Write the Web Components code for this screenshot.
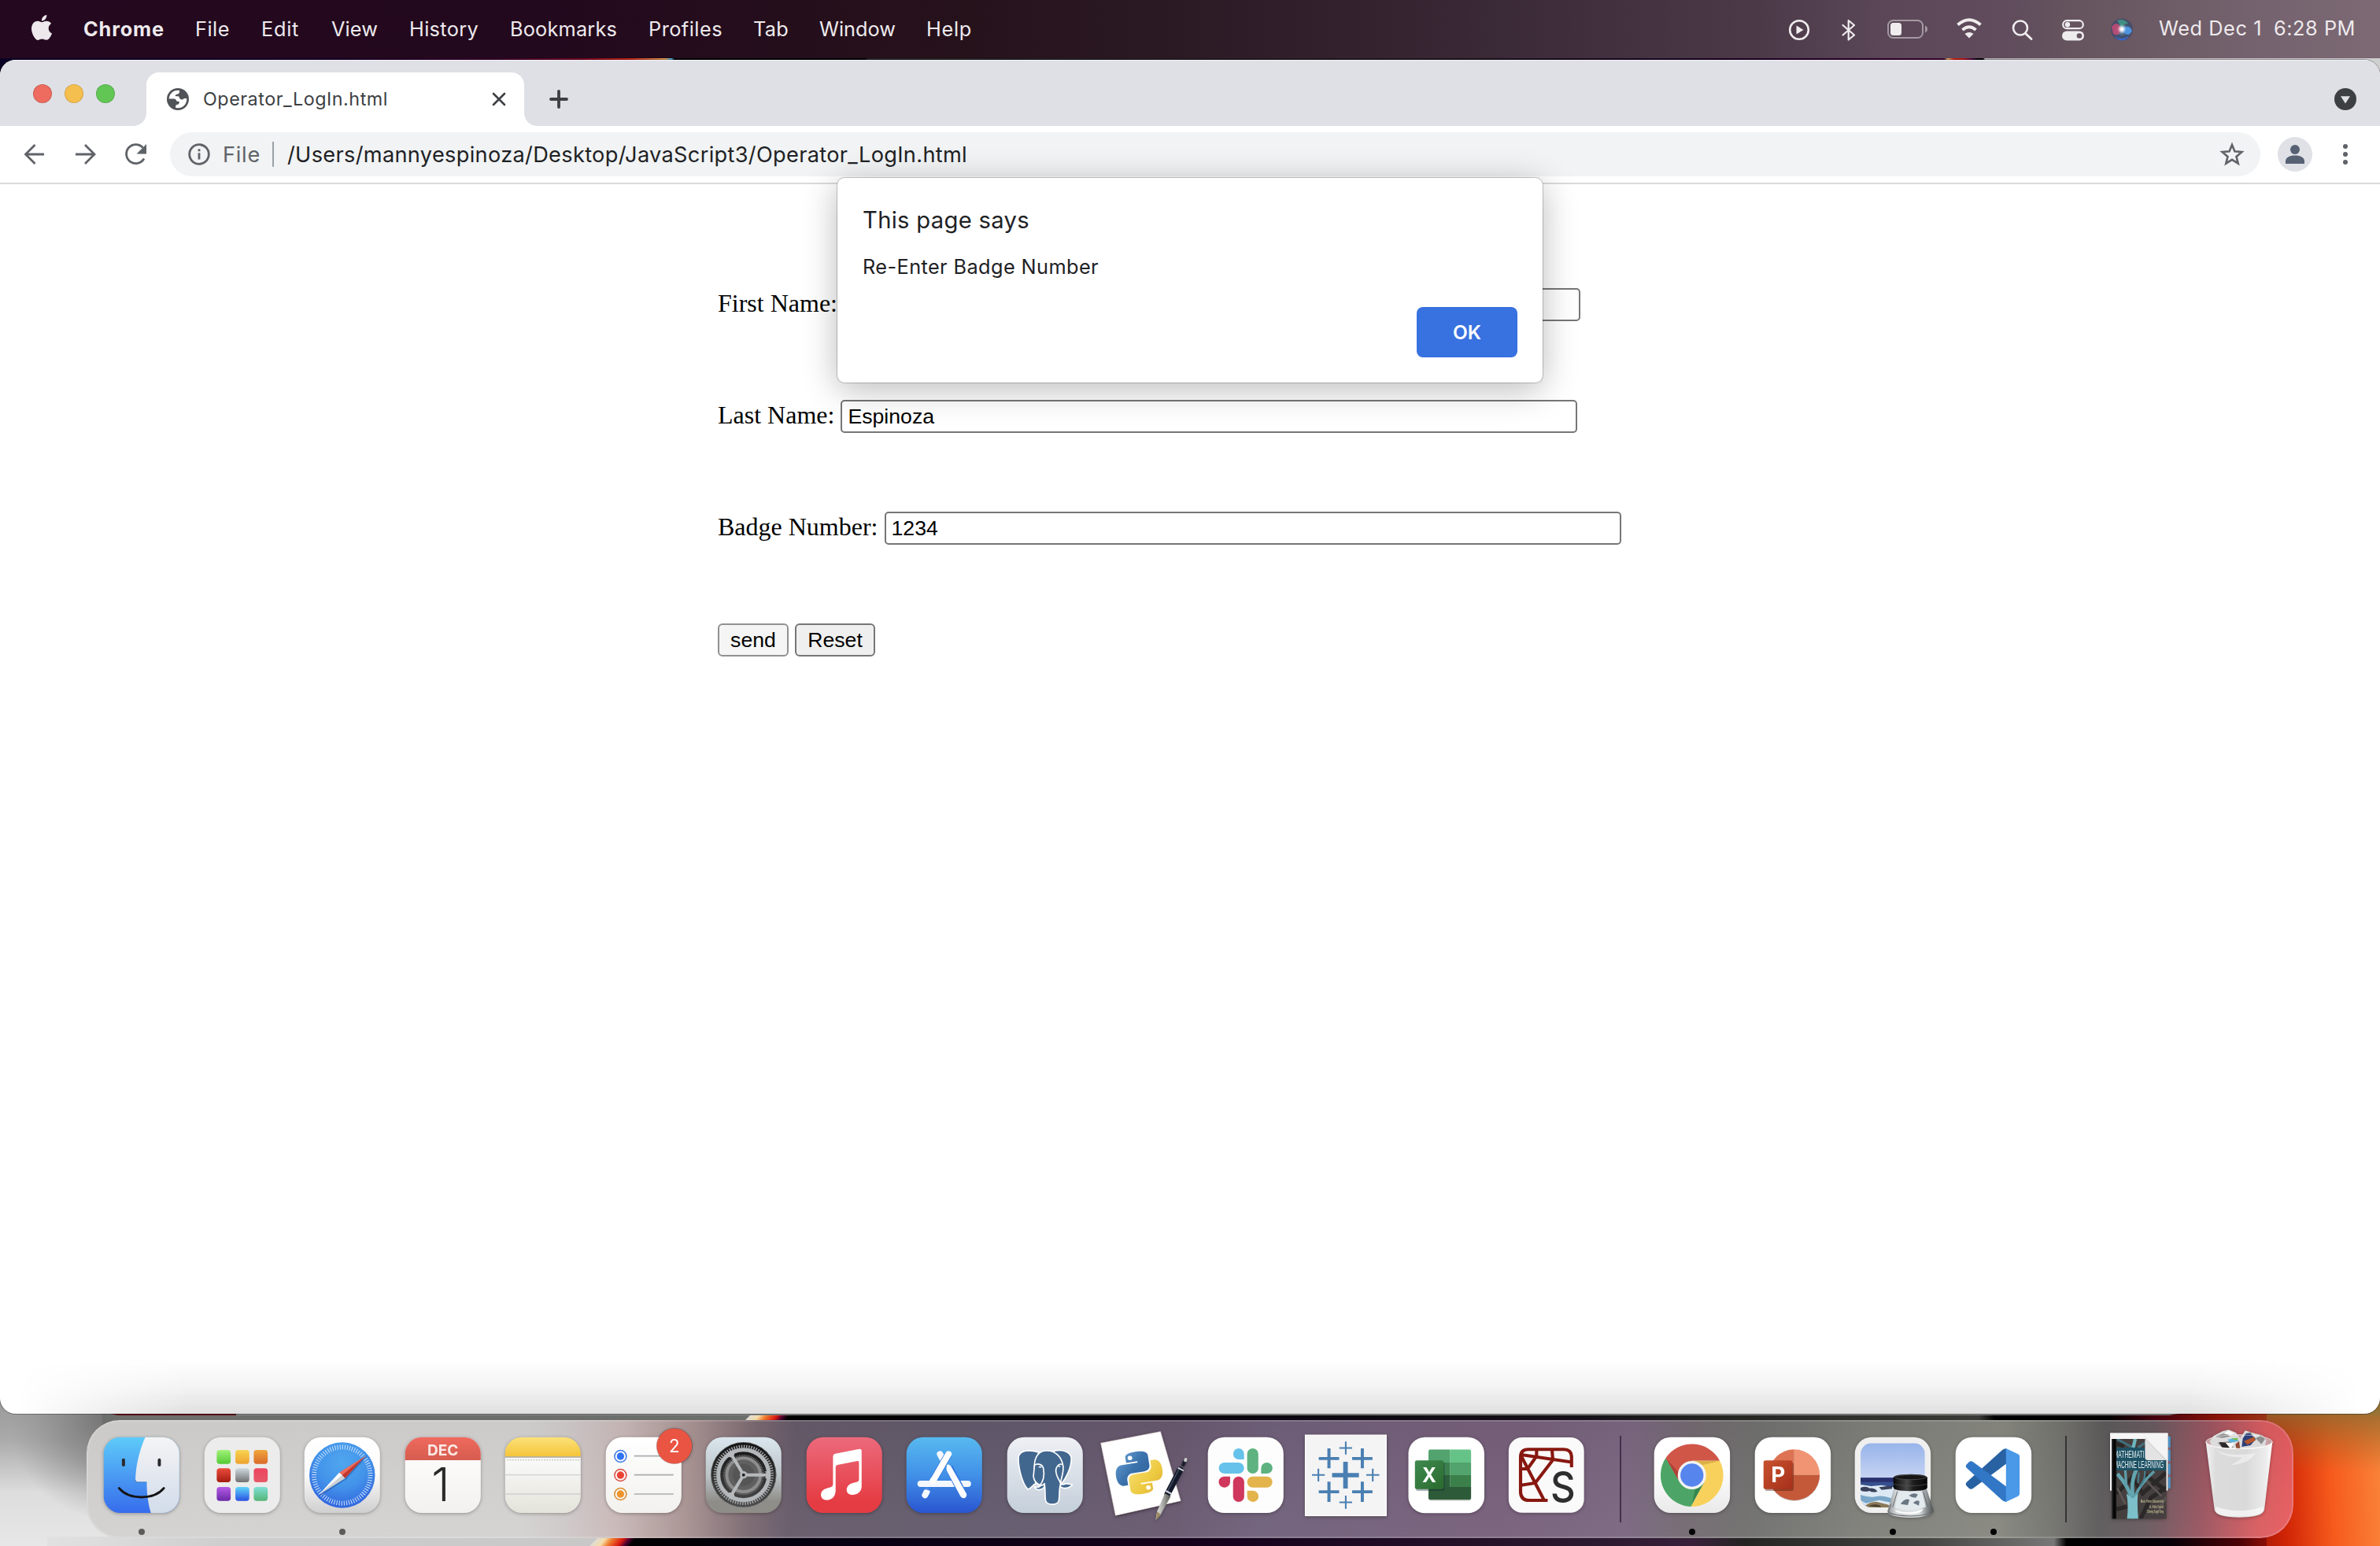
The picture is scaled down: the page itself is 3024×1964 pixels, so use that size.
<!DOCTYPE html>
<html lang="en">
<head>
<meta charset="utf-8">
<title>Operator_LogIn.html</title>
<style>
html,body{margin:0;padding:0;height:100%;overflow:hidden}
body{font-family:Inter,"Liberation Sans",sans-serif;color:#202124}
svg{display:block;overflow:visible}
</style>
</head>
<body>
<mac-desktop>
  <menu-bar slot="menu">
    <svg width="26" height="32" viewBox="2.2 0 19.6 24" slot="logo"><path fill="#ece8eb" d="M12.152 6.896c-.948 0-2.415-1.078-3.96-1.04-2.04.027-3.91 1.183-4.961 3.014-2.117 3.675-.546 9.103 1.519 12.09 1.013 1.454 2.208 3.09 3.792 3.039 1.52-.065 2.09-.987 3.935-.987 1.831 0 2.35.987 3.96.948 1.637-.026 2.676-1.48 3.676-2.948 1.156-1.688 1.636-3.325 1.662-3.415-.039-.013-3.182-1.221-3.22-4.857-.026-3.04 2.48-4.494 2.597-4.559-1.429-2.09-3.623-2.324-4.39-2.376-2-.156-3.675 1.09-4.61 1.09zM15.53 3.83c.843-1.012 1.4-2.427 1.245-3.83-1.207.052-2.662.805-3.532 1.818-.78.896-1.454 2.338-1.273 3.714 1.338.104 2.715-.688 3.559-1.701"/></svg>
    <menu-item style="width:142px;font-weight:700"><fit-text w="103">Chrome</fit-text></menu-item>
    <menu-item style="width:84px"><fit-text w="44">File</fit-text></menu-item>
    <menu-item style="width:89px"><fit-text w="48">Edit</fit-text></menu-item>
    <menu-item style="width:99px"><fit-text w="59">View</fit-text></menu-item>
    <menu-item style="width:128px"><fit-text w="88">History</fit-text></menu-item>
    <menu-item style="width:176px"><fit-text w="136">Bookmarks</fit-text></menu-item>
    <menu-item style="width:133px"><fit-text w="94">Profiles</fit-text></menu-item>
    <menu-item style="width:84px"><fit-text w="45">Tab</fit-text></menu-item>
    <menu-item style="width:136px"><fit-text w="97">Window</fit-text></menu-item>
    <menu-item style="width:60px"><fit-text w="58">Help</fit-text></menu-item>
    <svg slot="status" width="440" height="32" viewBox="2272 22 440 32" fill="none" stroke="#efecee" stroke-width="2.6">
      <circle cx="2286" cy="38" r="11.8"/><path d="M2282.5 32.5v11l9-5.5z" fill="#efecee" stroke="none"/>
      <path d="M2341.5 32 2356 44.5 2348.7 50.5V26L2356 32 2341.5 44.5" stroke-width="2.2" stroke-linejoin="round" stroke-linecap="round"/>
      <rect x="2399" y="26" width="44" height="22" rx="6.5" stroke="#a399a2" stroke-width="2"/><path d="M2446 32.5v9q3-1.200 3-4.500t-3-4.500z" fill="#a399a2" stroke="none"/><rect x="2402" y="29" width="14" height="16" rx="3.500" fill="#efecee" stroke="none"/>
      <path d="M2487.500 31.500Q2502 19 2516.500 31.500M2493.500 38Q2502 30.500 2510.500 38" stroke-width="4"/><path d="M2496.500 43Q2502 39 2507.500 43L2502 48.500z" fill="#efecee" stroke="none"/>
      <circle cx="2567" cy="35.500" r="9"/><path d="M2573.500 42.500 2581 49.500" stroke-width="3" stroke-linecap="round"/>
      <rect x="2621.200" y="26.200" width="25.600" height="10" rx="5" stroke-width="2.200"/><circle cx="2627" cy="31.200" r="3.200" fill="#efecee" stroke="none"/>
      <rect x="2620" y="39.500" width="28" height="12" rx="6" fill="#efecee" stroke="none"/><circle cx="2642" cy="45.500" r="3.300" fill="#655560" stroke="none"/>
      <g stroke="none"><circle cx="2696" cy="37.500" r="14" fill="url(#siri)"/><path d="M2683 34q7-9 12 2-2 12-10 7z" fill="#d84a76" opacity=".75"/><path d="M2690 26q9-3 14 4-6 0-8 5z" fill="#3fb78e" opacity=".6"/><path d="M2698 35q8-4 11 4-4 9-11 2z" fill="#4f9bea" opacity=".9"/><path d="M2687 46q9 6 18-1-2 6-9 6.500-6-.5-9-5.500z" fill="#3a6ad8" opacity=".8"/><circle cx="2696" cy="37" r="5.500" fill="url(#glow)"/></g>
      <defs><radialGradient id="siri"><stop offset="0" stop-color="#9fb8d8"/><stop offset=".6" stop-color="#3c5470"/><stop offset="1" stop-color="#4b4a68"/></radialGradient><radialGradient id="glow"><stop offset=".2" stop-color="#fff"/><stop offset="1" stop-color="#fff" stop-opacity="0"/></radialGradient></defs>
    </svg>
    <fit-text slot="clock" w="131" style="margin-right:15px">Wed Dec 1</fit-text>
    <fit-text slot="clock" w="104">6:28 PM</fit-text>
  </menu-bar>

  <chrome-window slot="window">
    <chrome-tab slot="tab">
      <fit-text w="235">Operator_LogIn.html</fit-text>
    </chrome-tab>
    <omni-box slot="bar">
      <fit-text w="48" slot="scheme">File</fit-text>
      <fit-text w="864">/Users/mannyespinoza/Desktop/JavaScript3/Operator_LogIn.html</fit-text>
    </omni-box>
    <login-form>
      <form-field label="First Name:"></form-field>
      <form-field label="Last Name:">Espinoza</form-field>
      <form-field label="Badge Number:">1234</form-field>
      <form-actions>
        <form-button style="width:90px;--bg:#f5f5f5;--bd:#919191">send</form-button>
        <form-button style="width:102px">Reset</form-button>
      </form-actions>
    </login-form>
    <js-alert slot="dialog">
      <fit-text slot="title" w="212">This page says</fit-text>
      <fit-text w="300">Re-Enter Badge Number</fit-text>
      <fit-text slot="ok" w="36">OK</fit-text>
    </js-alert>
  </chrome-window>

  <mac-dock slot="dock">
    <dock-item running style="--dot:#5b5b5b"><svg viewBox="349 120 382 450">
      <defs>
        <linearGradient id="fb" x2="0" y2="1"><stop stop-color="#5ecbf9"/><stop offset="1" stop-color="#366cec"/></linearGradient>
        <linearGradient id="fw" x2="0" y2="1"><stop stop-color="#f4f4f5"/><stop offset="1" stop-color="#d2dcea"/></linearGradient>
        <clipPath id="fc"><rect x="396" y="185" width="288" height="289" rx="64"/></clipPath>
      </defs>
      <g clip-path="url(#fc)"><rect x="395" y="184" width="290" height="291" fill="url(#fb)"/>
      <path d="M555 184C530 240 518 300 517 348Q517 356 524 356H560C560 400 565 440 576 475H686V184Z" fill="url(#fw)"/><path d="M517 348Q517 356 524 356H560" fill="none" stroke="#1f5592" stroke-width="3" opacity=".5"/></g>
      <path d="M471.500 272v19M608 272v19" stroke="#2b2b2d" stroke-width="12" stroke-linecap="round"/>
      <path d="M455 380C492 425 588 425 625 380" fill="none" stroke="#141414" stroke-width="9" stroke-linecap="round"/>
    </svg></dock-item>
    <dock-item><svg viewBox="733 120 382 450"><rect x="780" y="185" width="288" height="289" rx="64" fill="#ececec"/>
      <defs>
        <linearGradient id="l1" x2="0" y2="1"><stop stop-color="#a1f17a"/><stop offset="1" stop-color="#55ca35"/></linearGradient>
        <linearGradient id="l2" x2="0" y2="1"><stop stop-color="#f8d452"/><stop offset="1" stop-color="#efa32f"/></linearGradient>
        <linearGradient id="l3" x2="0" y2="1"><stop stop-color="#efa63a"/><stop offset="1" stop-color="#da6a2b"/></linearGradient>
        <linearGradient id="l4" x2="0" y2="1"><stop stop-color="#ea4b3b"/><stop offset="1" stop-color="#a41c10"/></linearGradient>
        <linearGradient id="l5" x2="0" y2="1"><stop stop-color="#cdd9e0"/><stop offset="1" stop-color="#707070"/></linearGradient>
        <linearGradient id="l6" x2="0" y2="1"><stop stop-color="#ec4560"/><stop offset="1" stop-color="#e65a68"/></linearGradient>
        <linearGradient id="l7" x2="0" y2="1"><stop stop-color="#b65be6"/><stop offset="1" stop-color="#6a29a8"/></linearGradient>
        <linearGradient id="l8" x2="0" y2="1"><stop stop-color="#5fd6fa"/><stop offset="1" stop-color="#2a50e2"/></linearGradient>
        <linearGradient id="l9" x2="0" y2="1"><stop stop-color="#7fe0d4"/><stop offset="1" stop-color="#55b577"/></linearGradient>
      </defs>
      <g><rect x="827" y="234" width="53" height="53" rx="11" fill="url(#l1)"/><rect x="898" y="234" width="53" height="53" rx="11" fill="url(#l2)"/><rect x="968" y="234" width="53" height="53" rx="11" fill="url(#l3)"/>
      <rect x="827" y="304" width="53" height="53" rx="11" fill="url(#l4)"/><rect x="898" y="304" width="53" height="53" rx="11" fill="url(#l5)"/><rect x="968" y="304" width="53" height="53" rx="11" fill="url(#l6)"/>
      <rect x="827" y="375" width="53" height="53" rx="11" fill="url(#l7)"/><rect x="898" y="375" width="53" height="53" rx="11" fill="url(#l8)"/><rect x="968" y="375" width="53" height="53" rx="11" fill="url(#l9)"/></g>
    </svg></dock-item>
    <dock-item running style="--dot:#5b5b5b"><svg viewBox="1111 120 382 450">
      <defs><linearGradient id="sw" x2="0" y2="1"><stop stop-color="#fff"/><stop offset=".5" stop-color="#fafafa"/><stop offset="1" stop-color="#cfcfcf"/></linearGradient>
      <radialGradient id="sb" cx=".5" cy=".3" r=".75"><stop stop-color="#50a6ee"/><stop offset=".5" stop-color="#4394ea"/><stop offset="1" stop-color="#2f5fdc"/></radialGradient></defs>
      <rect x="1158" y="185" width="288" height="289" rx="64" fill="url(#sw)"/><circle cx="1302" cy="330" r="125" fill="url(#sb)"/>
      <circle cx="1302" cy="330" r="107" fill="none" stroke="#d5e8fb" stroke-width="18" pathLength="72" stroke-dasharray=".3 .7"/>
      <path d="M1216 408 1316 344 1395 256" fill="none" stroke="#1c3c86" stroke-width="5" opacity=".4"/>
      <path d="M1392 256 1291 320 1303 331Z" fill="#ef6a5b"/><path d="M1392 256 1313 342 1302 330Z" fill="#c4362b"/><path d="M1213 405 1291 320 1303 331Z" fill="#fff"/><path d="M1213 405 1313 342 1302 330Z" fill="#cfcfd1"/>
    </svg></dock-item>
    <dock-item><svg viewBox="-5 120 382 450">
      <defs><linearGradient id="cr" x2="0" y2="1"><stop stop-color="#f0695e"/><stop offset="1" stop-color="#d55d4f"/></linearGradient><linearGradient id="cw" x2="0" y2="1"><stop stop-color="#fff"/><stop offset="1" stop-color="#f2f1ee"/></linearGradient>
      <clipPath id="cc"><rect x="42" y="185" width="288" height="289" rx="64"/></clipPath></defs>
      <g clip-path="url(#cc)"><rect x="40" y="184" width="292" height="291" fill="url(#cw)"/><rect x="40" y="184" width="292" height="89" fill="url(#cr)"/></g>
      <text x="186" y="254" font-size="58" font-weight="700" text-anchor="middle" textLength="118" lengthAdjust="spacingAndGlyphs" fill="#fbe9e6">DEC</text>
      <text x="178" y="430" font-size="178" font-weight="300" text-anchor="middle" fill="#2a2a2a">1</text>
    </svg></dock-item>
    <dock-item><svg viewBox="379 120 382 450">
      <defs><linearGradient id="ny" x2="0" y2="1"><stop stop-color="#fbe27a"/><stop offset="1" stop-color="#f5c439"/></linearGradient><linearGradient id="nw" x2="0" y2="1"><stop stop-color="#fbfbfa"/><stop offset="1" stop-color="#e4e3da"/></linearGradient>
      <clipPath id="nc"><rect x="426" y="185" width="288" height="289" rx="64"/></clipPath></defs>
      <g clip-path="url(#nc)"><rect x="425" y="258" width="290" height="218" fill="url(#nw)"/><rect x="425" y="184" width="290" height="75" fill="url(#ny)"/><path d="M425 261h290" stroke="#a6a294" stroke-width="4"/><path d="M434 272h276" stroke="#c9c8c4" stroke-width="5" stroke-dasharray="5 5"/><path d="M425 329h290M425 402h290" stroke="#d0d0d2" stroke-width="4"/></g>
    </svg></dock-item>
    <dock-item><svg viewBox="763 120 382 450">
      <rect x="810" y="185" width="288" height="289" rx="64" fill="url(#cw)"/>
      <g fill="none" stroke-width="4.500"><g stroke="#3a78e8"><circle cx="866" cy="258" r="22.500"/><circle cx="866" cy="258" r="14" fill="#2f74f4" stroke="none"/></g><g stroke="#d84a40"><circle cx="866" cy="330" r="22.500"/><circle cx="866" cy="330" r="14" fill="#ea4335" stroke="none"/></g><g stroke="#d98a2c"><circle cx="866" cy="402" r="22.500"/><circle cx="866" cy="402" r="14" fill="#ef932b" stroke="none"/></g></g>
      <path d="M918 257h150M918 329h150M918 402h150" stroke="#a9adb1" stroke-width="5"/>
      <circle cx="1071" cy="219" r="69" fill="#3a1a18" opacity=".35"/><circle cx="1071" cy="219" r="67" fill="#ea5443"/><text x="1071" y="243" font-size="67" text-anchor="middle" fill="#fff">2</text>
    </svg></dock-item>
    <dock-item><svg viewBox="1141 120 382 450">
      <defs><linearGradient id="gg" x2="0" y2="1"><stop stop-color="#dbe6ee"/><stop offset=".5" stop-color="#bcc4c8"/><stop offset=".85" stop-color="#8f8d88"/><stop offset="1" stop-color="#8f8d88"/></linearGradient><linearGradient id="gd" x2="0" y2="1"><stop stop-color="#111"/><stop offset="1" stop-color="#4b4b4b"/></linearGradient></defs>
      <rect x="1188" y="185" width="288" height="289" rx="64" fill="url(#gg)"/>
      <circle cx="1332" cy="329" r="125" fill="url(#gd)"/><circle cx="1332" cy="329" r="124" fill="none" stroke="#c5cacd" stroke-width="2" opacity=".6"/>
      <circle cx="1332" cy="329" r="108" fill="none" stroke="#9ea1a3" stroke-width="13" pathLength="72" stroke-dasharray=".5 .5"/>
      <circle cx="1332" cy="329" r="96" fill="none" stroke="#b3b7b9" stroke-width="15"/>
      <circle cx="1332" cy="329" r="73" fill="none" stroke="#777" stroke-width="8" pathLength="72" stroke-dasharray=".5 .5"/>
      <circle cx="1332" cy="329" r="64" fill="#606060" stroke="#8d8d8d" stroke-width="12"/>
      <circle cx="1332" cy="329" r="42" fill="#555" />
      <path d="M1332 329H1424M1332 329 1286 252M1332 329 1286 406" stroke="#b7babc" stroke-width="12"/><path d="M1412 316q16 12 0 26h18v-26zM1279 262q18 2 19-16l-17-10-12 18zM1279 396q18-2 19 16l-17 10-12-18z" fill="#b7babc"/>
      <circle cx="1332" cy="329" r="14" fill="#b7babc"/><circle cx="1332" cy="329" r="6" fill="#222"/>
    </svg></dock-item>
    <dock-item><svg viewBox="25 120 382 450">
      <defs><linearGradient id="mr" x2="0" y2="1"><stop stop-color="#ec6a7c"/><stop offset=".85" stop-color="#e53c43"/><stop offset="1" stop-color="#e53c43"/></linearGradient></defs>
      <rect x="72" y="185" width="288" height="289" rx="64" fill="url(#mr)"/>
      <path d="M173 260Q173 250 182 248L273 230Q282 229 282 238V372C282 395 264 405 248 405C233 405 225 396 225 386C225 369 240 360 260 357Q272 355 272 344V281Q272 275 266 276L190 291Q183 293 183 299V388C183 412 168 425 150 425C135 425 127 416 127 405C127 389 141 380 160 377Q173 375 173 364Z" fill="#fff"/>
    </svg></dock-item>
    <dock-item><svg viewBox="409 120 382 450">
      <defs><linearGradient id="ab" x2="0" y2="1"><stop stop-color="#58b9ef"/><stop offset=".5" stop-color="#4191e8"/><stop offset="1" stop-color="#2a55d0"/></linearGradient></defs>
      <rect x="456" y="185" width="288" height="289" rx="64" fill="url(#ab)"/>
      <g stroke="#f4f8fd" stroke-width="24" stroke-linecap="round" fill="none"><path d="M584 250 596 272"/><path d="M510 363H620" /><path d="M600 363H690"/><path d="M534 392 527 406"/></g>
      <path d="M616 250 562 344" stroke="#3a7fe0" stroke-width="29" stroke-linecap="butt" fill="none"/><path d="M616 250 562 344 556 352" stroke="#fff" stroke-width="24" stroke-linecap="round" fill="none"/>
      <path d="M618 300 673 406" stroke="#3679e0" stroke-width="31" fill="none"/><path d="M611 290Q606 306 610 314L662 411Q670 421 680 416 688 409 684 400L626 297Q616 286 611 290Z" fill="#fafcff"/>
      <path d="M524 383q14-4 26 8" stroke="#3a7de2" stroke-width="5" fill="none"/>
    </svg></dock-item>
    <dock-item><svg viewBox="793 120 382 450">
      <defs><linearGradient id="pg" x2="0" y2="1"><stop stop-color="#eef0f5"/><stop offset="1" stop-color="#c4cfda"/></linearGradient></defs>
      <rect x="840" y="185" width="288" height="289" rx="64" fill="url(#pg)"/>
      <g fill="#42678f" stroke="#fff" stroke-width="5" stroke-linejoin="round">
      <path d="M960 243C925 232 888 234 883 262C881 305 900 365 918 383C927 386 932 372 948 362L950 280Z"/>
      <path d="M1015 239C1050 230 1080 240 1084 264C1086 300 1064 342 1046 364L1035 330 1040 270Z"/>
      <path d="M944 374Q962 380 970 366L984 366Q982 384 960 386 948 384 944 374Z"/>
      <path d="M1036 364Q1052 368 1064 362L1088 366Q1078 380 1058 380 1044 378 1036 364Z"/>
      <path d="M944 300C942 262 960 237 990 237C1025 236 1048 262 1053 296C1056 325 1043 345 1043 364C1037 385 1040 405 1037 425C1034 446 990 448 986 425C983 400 986 385 982 362C970 378 950 362 946 350Z"/>
      <path d="M944 292C956 284 974 288 978 304C984 336 976 352 966 368C950 362 942 350 940 335Z"/>
      <path d="M1053 290C1040 284 1030 292 1026 306C1022 330 1036 342 1044 362" fill="none"/></g>
      <path d="M958 298q8-4 14 1-6 6-14-1zM1032 296q6-4 12 0-6 6-12 0z" fill="#fff"/>
    </svg></dock-item>
    <dock-item><svg viewBox="1177 120 382 450">
      <defs><linearGradient id="pb" x2="1" y2="1"><stop stop-color="#6fa5d8"/><stop offset=".5" stop-color="#3b73ad"/><stop offset="1" stop-color="#2f5f96"/></linearGradient><linearGradient id="py" x2="1" y2="1"><stop stop-color="#f7e27a"/><stop offset=".6" stop-color="#edc93f"/><stop offset="1" stop-color="#d9ae3a"/></linearGradient><linearGradient id="ps" x2="1" y2="0"><stop stop-color="#e8e8e4"/><stop offset=".5" stop-color="#a8a8a4"/><stop offset="1" stop-color="#55554f"/></linearGradient></defs>
      <path d="M1201 212 1256 488 1505 432 1500 424Z" fill="#2a2030" opacity=".6"/>
      <path d="M1200 208 1427 164 1504 428 1256 484Z" fill="#fff" stroke="#e4d9d4" stroke-width="2"/>
      <g transform="translate(1346 321) rotate(-9) scale(7.400 6.800) translate(-12 -12)"><path fill="url(#pb)" d="M14.250.18l.9.2.73.26.59.3.45.32.34.34.25.34.16.33.1.3.04.26.02.2-.01.13V8.500l-.05.63-.13.55-.21.46-.26.38-.3.31-.33.25-.35.19-.35.14-.33.1-.3.07-.26.04-.21.02H8.770l-.69.05-.59.14-.5.22-.41.27-.33.32-.27.35-.2.36-.15.37-.1.35-.07.32-.04.27-.02.21v3.060H3.170l-.21-.03-.28-.07-.32-.12-.35-.18-.36-.26-.36-.36-.35-.46-.32-.59-.28-.73-.21-.88-.14-1.050-.05-1.230.06-1.220.16-1.040.24-.87.32-.71.36-.57.4-.44.42-.33.42-.24.4-.16.36-.1.32-.05.24-.01h.16l.06.01h8.160v-.83H6.180l-.01-2.750-.02-.37.05-.34.11-.31.17-.28.25-.26.31-.23.38-.2.44-.18.51-.15.58-.12.64-.1.71-.06.77-.04.84-.02 1.270.05z"/>
      <path fill="url(#py)" d="M21.040 6.110l.28.06.32.12.35.18.36.27.36.35.35.47.32.59.28.73.21.88.14 1.040.05 1.230-.06 1.230-.16 1.040-.24.86-.32.71-.36.57-.4.45-.42.33-.42.24-.4.16-.36.09-.32.05-.24.02-.16-.01h-8.220v.82h5.840l.01 2.760.02.36-.05.34-.11.31-.17.29-.25.25-.31.24-.38.2-.44.17-.51.15-.58.13-.64.09-.71.07-.77.04-.84.01-1.270-.04-1.070-.14-.9-.2-.73-.25-.59-.3-.45-.33-.34-.34-.25-.34-.16-.33-.1-.3-.04-.25-.02-.2.01-.13v-5.340l.05-.64.13-.54.21-.46.26-.38.3-.32.33-.24.35-.2.35-.14.33-.1.3-.06.26-.04.21-.02.13-.01h5.840l.69-.05.59-.14.5-.21.41-.28.33-.32.27-.35.2-.36.15-.36.1-.35.07-.32.04-.28.02-.21V6.070h2.090z"/><circle cx="8.500" cy="3" r="1.200" fill="#fff"/><circle cx="15.500" cy="21" r="1.200" fill="#fff"/></g>
      <path d="M1502 310 1454 402" stroke="#151a2a" stroke-width="24" stroke-linecap="round"/><path d="M1498 306 1452 396" stroke="#4a556c" stroke-width="4"/><path d="M1522 272 1514 290" stroke="#1c1f2c" stroke-width="13" stroke-linecap="round"/><path d="M1523 270 1522 274" stroke="#ccc" stroke-width="12" stroke-linecap="round"/>
      <path d="M1494 302 1515 313M1448 390 1470 402" stroke="#cfd3da" stroke-width="6"/><path d="M1444 400 1466 411 1428 480 1409 500 1414 468Z" fill="url(#ps)"/><path d="M1414 468 1428 480 1410 500Z" fill="#a08d5e"/>
    </svg></dock-item>
    <dock-item><svg viewBox="53 120 370 450">
      <rect x="98.500" y="185" width="279" height="289" rx="62" fill="#fdfdfd"/>
      <g fill="#66c2ea"><rect x="139" y="282" width="93" height="42" rx="20.500"/><path d="M232 270H212A20 21 0 1 1 232 249Z"/></g>
      <g fill="#5db27f"><rect x="243.500" y="228" width="41" height="96" rx="20.500"/><path d="M295 324V303A21 21 0 1 1 316 324Z"/></g>
      <g fill="#e3b44c"><rect x="243.500" y="335" width="93" height="42" rx="20.500"/><path d="M243.500 389H264A21 21.500 0 1 1 243.500 410Z"/></g>
      <g fill="#cf375c"><rect x="191.500" y="335" width="41" height="97" rx="20.500"/><path d="M180.500 335V357A21 21 0 1 1 160 335Z"/></g>
    </svg></dock-item>
    <dock-item><svg viewBox="425 120 370 450">
      <rect x="459" y="177" width="303" height="312" fill="#3a2c3c" opacity=".4"/><rect x="461.500" y="177.500" width="298" height="307" fill="#f4f4f4" stroke="#fff" stroke-width="4"/>
      <g fill="none" stroke="#4a7fb2"><path d="M560 330h99M609.500 279v102" stroke-width="17"/><path d="M511 266.500h75M548.500 228v76M634 266.500h75M671.500 228v76M511 393.500h75M548.500 355v77M634 393.500h75M671.500 355v77" stroke-width="11.500"/><path d="M587 226.500h47M610.500 202v49M587 433.500h47M610.500 408v50M486 329h47M509.500 305v49M686 329h48M710 305v49" stroke-width="6"/></g>
    </svg></dock-item>
    <dock-item><svg viewBox="796 120 370 450">
      <defs><linearGradient id="xg" x2="1" y2="1"><stop stop-color="#3f8a50"/><stop offset="1" stop-color="#2a6a2d"/></linearGradient><clipPath id="xc"><rect x="915" y="232" width="157" height="192" rx="7"/></clipPath></defs>
      <rect x="841" y="185" width="280" height="290" rx="62" fill="#fff"/><rect x="916" y="240" width="156" height="188" rx="7" fill="#999" opacity=".4"/>
      <g clip-path="url(#xc)"><path d="M915 232h79v50h-79z" fill="#52a36d"/><path d="M994 232h80v50h-80z" fill="#66c388"/><path d="M915 282h79v48h-79z" fill="#3c8050"/><path d="M994 282h80v48h-80z" fill="#52a36d"/><path d="M915 330h79v46h-79z" fill="#2e5f3c"/><path d="M994 330h80v46h-80z" fill="#3b804b"/><path d="M915 375h160v50h-160z" fill="#2d5b39"/></g>
      <rect x="868" y="280" width="107" height="110" rx="8" fill="#123" opacity=".35"/><rect x="865" y="274" width="106" height="109" rx="8" fill="url(#xg)"/>
      <text x="918" y="356" font-size="78" font-weight="700" text-anchor="middle" textLength="52" lengthAdjust="spacingAndGlyphs" fill="#fff">X</text>
    </svg></dock-item>
    <dock-item><svg viewBox="1162 120 370 450">
      <rect x="1208" y="186" width="278" height="287" rx="50" fill="#fafafa"/>
      <g fill="none" stroke="#871810" stroke-width="12"><path d="M1440 300V258Q1438 232 1412 232H1280Q1252 232 1252 262V396Q1254 426 1284 426H1352"/><path d="M1254 252 1436 280M1311 234V258L1278 306H1252M1254 256 1306 360M1368 234 1371 272 1306 360 1254 368M1306 360 1338 424"/></g>
      <text x="1408" y="431" font-size="162" font-weight="500" text-anchor="middle" textLength="92" lengthAdjust="spacingAndGlyphs" fill="#2e2e2e">S</text>
    </svg></dock-item>
    <dock-divider style="width:57.500px;padding-left:3px;--line:#43304a"></dock-divider>
    <dock-item running><svg viewBox="169 120 382 450">
      <defs><linearGradient id="hw" x2="0" y2="1"><stop offset=".4" stop-color="#fff"/><stop offset="1" stop-color="#e9e9e9"/></linearGradient></defs>
      <rect x="216" y="185" width="289" height="289" rx="64" fill="url(#hw)"/>
      <path d="M260 265A120 120 0 0 1 466 275H360L313 356Z" fill="#d05648"/><path d="M466 275A120 120 0 0 1 356 450L407 356 360 275Z" fill="#f8d15c"/><path d="M260 265A120 120 0 0 0 356 450L407 356H313Z" fill="#4ca566"/>
      <path d="M360 275H466L400 292Z" fill="#c08f35" opacity=".5"/><path d="M260 265 305 345 308 318Z" fill="#8c2c22" opacity=".5"/><path d="M407 356 360 440 372 384Z" fill="#1f6a38" opacity=".5"/>
      <circle cx="360" cy="330" r="54" fill="#f3f3f3"/><circle cx="360" cy="330" r="44" fill="#5685ee"/>
    </svg></dock-item>
    <dock-item><svg viewBox="553 120 382 450">
      <defs><linearGradient id="pr" x2="1" y2="1"><stop stop-color="#c8522e"/><stop offset="1" stop-color="#a5301a"/></linearGradient></defs>
      <rect x="600" y="185" width="289" height="289" rx="64" fill="#fff"/><circle cx="750" cy="332" r="97" fill="#888" opacity=".4"/>
      <path d="M653 329A97 97 0 0 1 750 232V329Z" fill="#dd7352"/><path d="M750 232A97 97 0 0 1 847 329H750Z" fill="#f09473"/><path d="M653 329A97 97 0 0 0 847 329Z" fill="#c4593a"/>
      <rect x="638" y="282" width="110" height="108" rx="8" fill="#4a1408" opacity=".4"/><rect x="633" y="274" width="110" height="109" rx="8" fill="url(#pr)"/>
      <text x="689" y="357" font-size="80" font-weight="700" text-anchor="middle" textLength="54" lengthAdjust="spacingAndGlyphs" fill="#fff">P</text>
    </svg></dock-item>
    <dock-item running><svg viewBox="931 120 382 450">
      <defs><linearGradient id="sk" x2="0" y2="1"><stop stop-color="#97b4ea"/><stop offset="1" stop-color="#c6d4f3"/></linearGradient><clipPath id="pc"><rect x="1000" y="208" width="245" height="245" rx="42"/></clipPath><linearGradient id="jr" x2="1" y2="0"><stop stop-color="#8a8d90"/><stop offset=".2" stop-color="#d8dcde"/><stop offset=".7" stop-color="#dde2e4"/><stop offset=".85" stop-color="#8a8f92"/><stop offset="1" stop-color="#4c4f51"/></linearGradient><linearGradient id="jc" x2="1" y2="0"><stop stop-color="#080808"/><stop offset=".4" stop-color="#484848"/><stop offset=".6" stop-color="#1c1c1c"/><stop offset="1" stop-color="#050505"/></linearGradient></defs>
      <rect x="978" y="185" width="289" height="289" rx="64" fill="#efefef"/>
      <g clip-path="url(#pc)"><rect x="1000" y="208" width="245" height="134" fill="url(#sk)"/><rect x="1000" y="340" width="245" height="115" fill="#36508f"/><rect x="1000" y="340" width="245" height="16" fill="#2a2f6e"/>
      <path d="M1000 366l40 6 40-4 40 8 60-6v84h-180z" fill="#dce9f4"/><path d="M1000 378q22-8 34 2 20-2 30 12-18 6-30-2-20 6-34-2zM1070 376l50-6v12l-40 4z" fill="#39405a"/><path d="M1000 405q40 12 60 6t60 8v16l-50-10-50 12-20-12z" fill="#7aa6c8"/><path d="M1018 446q18-16 44-14l40 10 30 14h-120z" fill="#8a7a58"/><path d="M1030 448q20-10 40-4l10 8z" fill="#4b3f30"/></g>
      <path d="M1126 384 1102 468Q1104 490 1190 492 1274 490 1278 466L1252 384Z" fill="url(#jr)" opacity=".95"/><path d="M1146 392 1130 452Q1190 476 1248 450L1234 392Z" fill="#e2eaee"/><path d="M1152 440q18-26 34-16l-6 20zM1184 408q16-14 34-4l-8 12-14-2zM1200 436q14-14 24-6l-2 16z" fill="#6b7784"/><path d="M1128 462q60 22 110-4-6 20-56 20-44-2-54-16z" fill="#fff"/><path d="M1116 440 1106 470Q1120 484 1190 486 1264 484 1272 464M1140 392 1122 452M1238 392 1256 450" fill="none" stroke="#666a6c" stroke-width="3"/>
      <path d="M1125 340Q1125 327 1190 326 1254 327 1254 340V378Q1254 389 1190 391 1125 389 1125 378Z" fill="url(#jc)"/><ellipse cx="1190" cy="338" rx="60" ry="9" fill="#151515" stroke="#5b5b5b" stroke-width="2"/><path d="M1126 364q64 14 128 0" fill="none" stroke="#555" stroke-width="2"/>
    </svg></dock-item>
    <dock-item running><svg viewBox="1315 120 382 450">
      <rect x="1362" y="185" width="289" height="289" rx="64" fill="#fff"/>
      <path d="M1404 357 1540 234Q1548 227 1556 229V286L1428 381Q1420 386 1414 381L1403 370Q1399 363 1404 357Z" fill="#2862a3"/>
      <path d="M1404 302 1540 426Q1548 433 1556 431V374L1428 279Q1420 274 1414 279L1403 290Q1399 297 1404 302Z" fill="#3277c6"/>
      <path d="M1554 228 1600 250Q1606 253 1606 260V400Q1606 407 1600 410L1554 432Z" fill="#4a99e8"/>
    </svg></dock-item>
    <dock-divider style="width:60px;padding-right:3px;--line:#343432"></dock-divider>
    <dock-item><svg viewBox="349 120 382 450">
      <defs><clipPath id="bc"><rect x="448" y="192" width="189" height="304"/></clipPath><linearGradient id="sp" x2="1" y2="0"><stop stop-color="#333"/><stop offset=".5" stop-color="#000"/><stop offset="1" stop-color="#151515"/></linearGradient></defs>
      <rect x="645" y="182" width="9" height="199" fill="#4c93c6"/><path d="M645 229h9M645 281h9M645 332h9" stroke="#8a5a66" stroke-width="9"/>
      <rect x="424" y="169" width="220" height="220" fill="#f6f6f6"/><rect x="430" y="192" width="208" height="304" fill="#3b3736"/>
      <g clip-path="url(#bc)" fill="none"><rect x="448" y="192" width="190" height="304" fill="#45403f"/><path d="M448 400l60-60 40 60 90-80M540 496l40-80 60-40M448 210l30 10M448 460l40-10M560 330l78 60" stroke="#2b2828" stroke-width="16"/><path d="M560 350l60 60M600 480l40-70M452 380l30 60" stroke="#5c5553" stroke-width="8"/>
      <path d="M450 192 510 225M580 192 530 225" stroke="#41707d" stroke-width="9"/><path d="M520 192 512 225" stroke="#6fb4be" stroke-width="13"/>
      <path d="M510 500Q512 440 510 400 504 350 524 310M508 430Q500 380 452 325" stroke="#62a5b0" stroke-width="14"/><path d="M512 430Q530 370 592 316M486 372 482 312" stroke="#5d9ba7" stroke-width="10"/><path d="M488 500Q496 440 486 400L510 420 530 400Q526 450 532 500Z" fill="#7cc0ca"/><path d="M536 374Q560 350 556 314M530 360 534 320" stroke="#44818f" stroke-width="6"/>
      <rect x="448" y="225" width="190" height="87" fill="#1d5164"/></g>
      <g clip-path="url(#bc)" fill="#e3edef" font-family="'Liberation Sans',sans-serif"><text x="438" y="264" font-size="38" textLength="116" lengthAdjust="spacingAndGlyphs">MATHEMATI</text><text x="438" y="303" font-size="38" textLength="190" lengthAdjust="spacingAndGlyphs">MACHINE LEARNING</text></g>
      <g fill="#b9b28c" font-size="15" font-weight="700" text-anchor="end"><text x="628" y="436" textLength="88" lengthAdjust="spacingAndGlyphs">Marc Peter Deisenroth</text><text x="628" y="455" textLength="54" lengthAdjust="spacingAndGlyphs">A. Aldo Faisal</text><text x="628" y="473" textLength="64" lengthAdjust="spacingAndGlyphs">Cheng Soon Ong</text></g>
      <rect x="430" y="192" width="18" height="304" fill="url(#sp)"/>
      <path d="M540 171H644V272H637L557 190Z" fill="#f4f4f4"/><path d="M557 185V262Q557 273 568 273H637Z" fill="#e3e3e3"/><path d="M557 190 637 273" stroke="#c4c4c4" stroke-width="2"/>
    </svg></dock-item>
    <dock-item style="width:122px"><svg viewBox="729 120 366 450">
      <defs><linearGradient id="tr" x2="1" y2="0"><stop stop-color="#f3f3f3"/><stop offset=".15" stop-color="#dcdcdc"/><stop offset=".6" stop-color="#d9d9d9"/><stop offset=".9" stop-color="#ececec"/><stop offset="1" stop-color="#fff"/></linearGradient></defs>
      <ellipse cx="912" cy="203" rx="127" ry="29" fill="#c9a0a4"/>
      <path d="M800 200 815 180 850 162 872 157 900 168 916 190 935 160 975 172 1000 178 1016 196 1010 222 960 234 860 232 805 215Z" fill="#dcdcdc"/>
      <path d="M820 184l40-16 18 14-30 6zM830 206l50-6 10 24-40 4zM930 176l26-12 10 20-20 10zM975 190l20-12 16 14-14 20z" fill="#8d8d8d"/><path d="M836 204l36 4 6 18-30 0z" fill="#2c2626"/><path d="M868 194l36-6 6 12-30 6z" fill="#5ab4dc"/><path d="M880 190l28-2-4 10z" fill="#7cc24a"/><path d="M926 190l14-20 14 2 22 20-20 24-34 6z" fill="#2f3f78"/><path d="M930 200l40-16 4 14-30 16z" fill="#b5562d"/><path d="M898 212l14-12 4 30h-14z" fill="#8f4a34"/><path d="M852 172l20-12 22 10-14 8zM860 206l34 2-14 22z" fill="#fafafa"/>
      <path d="M785 203C790 238 1034 238 1039 203L1008 462Q1002 491 912 491 824 491 818 462Z" fill="url(#tr)"/><path d="M785 203C790 238 1034 238 1039 203" fill="none" stroke="#fff" stroke-width="4" opacity=".8"/><path d="M785 203C790 168 1034 168 1039 203" fill="none" stroke="#fff" stroke-width="3" opacity=".5"/>
      <path d="M824 236q60 26 150 10-20 40-94 46 30-14 44-30-60 2-100-26z" fill="#fff" opacity=".45"/><path d="M822 450Q912 480 1004 450L1002 468Q984 488 912 488 838 488 822 468Z" fill="#fff" opacity=".6"/>
    </svg></dock-item>
  </mac-dock>
</mac-desktop>

<script>
const define = (name, html) => {
  const tpl = document.createElement('template');
  tpl.innerHTML = html;
  customElements.define(name, class extends HTMLElement {
    constructor() {
      super();
      this.attachShadow({ mode: 'open' }).append(tpl.content.cloneNode(true));
    }
    connectedCallback() {
      const label = this.shadowRoot.querySelector('[data-label]');
      if (label) label.textContent = this.getAttribute('label');
    }
  });
};

define('mac-desktop', `<style>
:host{display:grid;grid-template-rows:74px 1722px 168px;width:3024px;height:1964px;overflow:hidden;background:#000}
.win{padding-top:2px;background:linear-gradient(90deg,#0a0024 0,#14002a 400px,#3a0028 640px,#7a0020 740px,#d02010 800px,#e8a050 845px,#40b0e0 853px,#000 857px,#000 1100px,#222 1102px,#1c1a1e 1800px,#1a0022 2200px,#3a0030 2470px,#e8b060 2475px,#d02010 2482px,#c01010 2495px,#400040 2506px,#000 2512px,#000 2520px,#b4b4b4 2522px,#cfcfcf 3000px);display:flex}
.dock{position:relative;display:flex}
.wall{position:absolute;inset:-26px 0 0 0;z-index:0;display:block}
::slotted(chrome-window){flex:1;z-index:1}
::slotted(mac-dock){z-index:3}
</style>
<slot name="menu"></slot>
<div class="win"><slot name="window"></slot></div>
<div class="dock">
<svg class="wall" width="3024" height="194" viewBox="0 1770 3024 194">
<defs>
<linearGradient id="w1" x2="0" y2="1"><stop stop-color="#969696"/><stop offset=".3" stop-color="#aaa"/><stop offset=".65" stop-color="#dcdddc"/><stop offset="1" stop-color="#e6e7e6"/></linearGradient>
<linearGradient id="w0" gradientUnits="userSpaceOnUse" x1="0" x2="800"><stop stop-color="#e4e5e4"/><stop offset=".15" stop-color="#dcdddc"/><stop offset=".35" stop-color="#cdcecd"/><stop offset="1" stop-color="#c6c7c6"/></linearGradient>
<radialGradient id="w1s" gradientUnits="userSpaceOnUse" cx="140" cy="1800" r="130"><stop stop-color="#707070"/><stop offset=".5" stop-color="#888" stop-opacity=".7"/><stop offset="1" stop-color="#999" stop-opacity="0"/></radialGradient>
<linearGradient id="w2" gradientUnits="userSpaceOnUse" x1="985" x2="3024"><stop stop-color="#000"/><stop offset=".25" stop-color="#08020c"/><stop offset=".5" stop-color="#151018"/><stop offset=".6" stop-color="#252622"/><stop offset=".75" stop-color="#3a3b36"/><stop offset=".76" stop-color="#000"/><stop offset=".83" stop-color="#000"/><stop offset=".86" stop-color="#44000e"/><stop offset=".9" stop-color="#8a1408"/><stop offset=".95" stop-color="#a04a20"/><stop offset="1" stop-color="#cf9550"/></linearGradient>
<linearGradient id="w3" gradientUnits="userSpaceOnUse" x1="785" x2="3024"><stop stop-color="#000"/><stop offset=".1" stop-color="#050010"/><stop offset=".35" stop-color="#16021c"/><stop offset=".56" stop-color="#2c1a30"/><stop offset=".61" stop-color="#38203a"/><stop offset=".64" stop-color="#242422"/><stop offset=".74" stop-color="#444442"/><stop offset=".815" stop-color="#777"/><stop offset=".822" stop-color="#000"/><stop offset=".88" stop-color="#060008"/><stop offset=".92" stop-color="#4a0206"/><stop offset=".95" stop-color="#c81806"/><stop offset=".975" stop-color="#fc5418"/><stop offset="1" stop-color="#fd8238"/></linearGradient>
<linearGradient id="w4" gradientUnits="userSpaceOnUse" x1="2840" y1="1860" x2="3040" y2="1850"><stop stop-color="#8a1004"/><stop offset=".3" stop-color="#d02406"/><stop offset=".6" stop-color="#f65a1c"/><stop offset="1" stop-color="#fb8c40"/></linearGradient>
<linearGradient id="w5" gradientUnits="userSpaceOnUse" x1="0" y1="1790" x2="0" y2="1870"><stop stop-color="#8a6a30" stop-opacity=".85"/><stop offset="1" stop-color="#a06020" stop-opacity="0"/></linearGradient>
<linearGradient id="fl" gradientUnits="userSpaceOnUse" x1="0" y1="0" x2="31.400" y2="25"><stop stop-color="#dcdcda"/><stop offset=".25" stop-color="#f6dca8"/><stop offset=".42" stop-color="#f08030"/><stop offset=".7" stop-color="#d81810"/><stop offset=".85" stop-color="#500030"/><stop offset="1" stop-color="#000"/></linearGradient>
</defs>
<path fill="url(#w1)" d="M0 1770H200V1964H0z"/><path fill="url(#w1s)" d="M0 1790H200V1930H0z"/>
<path fill="#6c6e6c" d="M130 1796H985V1810H130z"/><path fill="url(#w0)" d="M60 1952H800V1964H60z"/>
<path fill="url(#w2)" d="M975 1780H3024V1870H975z"/>
<path fill="url(#w3)" d="M785 1940H3024V1964H785z"/>
<path fill="url(#w4)" d="M2880 1798H3024V1964H2880z"/><path fill="url(#w5)" d="M2880 1770H3024V1870H2880z"/>
<g transform="translate(749 1964)"><path fill="url(#fl)" d="M0 0 12-12H62L50 0z"/></g><g transform="translate(947 1804)"><path fill="url(#fl)" d="M0 0 8-8H58L50 0z"/></g>
<path fill="#868886" d="M150 1796H2760l8 0-12 2H150z"/><path fill="#5c0c16" d="M140 1796H300V1798H150z"/>
</svg>
<slot name="dock"></slot></div>`);

define('menu-bar', `<style>
:host{display:flex;align-items:center;height:74px;box-sizing:border-box;padding:0 31px 0 40px;color:#eeeaed;font-size:25.300px;line-height:32px;
background:linear-gradient(90deg,#24081f 0,#23091d 700px,#26121b 1230px,#2a1823 1460px,#3a2936 1900px,#4c3a49 2240px,#5b4757 2400px,#604c5c 2550px,#67565f 2660px,#74626e 2860px,#7c6974 3024px)}
.logo{width:66px;padding-bottom:4px}.items{display:flex;padding-bottom:1px}.gap{flex:1}.status{width:471px;padding-top:2px}.clock{display:flex;padding-bottom:2px;width:250px}
</style><div class="logo"><slot name="logo"></slot></div><div class="items"><slot></slot></div><div class="gap"></div><div class="status"><slot name="status"></slot></div><div class="clock"><slot name="clock"></slot></div>`);

define('menu-item', `<style>:host{display:block;white-space:nowrap}</style><slot></slot>`);

define('chrome-window', `<style>
:host{display:flex;flex-direction:column;position:relative;height:1720px;background:#fff;border-radius:20px;overflow:hidden;box-shadow:0 0 0 1px rgba(0,0,0,.3)}
.strip{display:flex;height:84px;background:#dfe0e5;box-shadow:inset 0 1px #f3f0f7;box-sizing:border-box;padding-left:42px;flex:none}
.lights{display:flex;gap:16px;width:144px;padding-top:31px}
.lights i{width:24px;height:24px;border-radius:50%;box-sizing:border-box;border:1px solid rgba(0,0,0,.13)}
.plus{margin:38px 0 0 32px}.drop{margin:36px 30px 0 auto}
.view{flex:1;border-top:2px solid #dadada}
.shade{position:absolute;left:0;right:0;bottom:0;height:70px;background:linear-gradient(180deg,rgba(0,0,0,0),rgba(0,0,0,.045) 50%,rgba(0,0,0,.12));-webkit-mask-image:linear-gradient(90deg,transparent 20px,#000 240px,#000 2780px,transparent 3000px);mask-image:linear-gradient(90deg,transparent 20px,#000 240px,#000 2780px,transparent 3000px)}
.dialog{position:absolute;left:1064px;top:150px}
</style>
<div class="strip"><div class="lights"><i style="background:#ed6b5f"></i><i style="background:#f5bf4f"></i><i style="background:#62c655"></i></div>
<slot name="tab"></slot>
<svg class="plus" width="24" height="24"><path d="M12 2v20M2 12h20" stroke="#3c4043" stroke-width="3.800" stroke-linecap="round"/></svg>
<svg class="drop" width="28" height="28"><circle cx="14" cy="14" r="14" fill="#3c4043"/><path d="M8 10.300h12L14 19.500z" fill="#dfe0e5"/></svg></div>
<slot name="bar"></slot><div class="view"><slot></slot></div><div class="shade"></div><div class="dialog"><slot name="dialog"></slot></div>`);

define('chrome-tab', `<style>
:host{display:flex;align-items:center;position:relative;width:480px;height:68px;margin-top:16px;box-sizing:border-box;padding:0 23px 0 26px;background:#fff;border-radius:16px 16px 0 0;font-size:23.300px;color:#3c4043}
:host::before,:host::after{content:"";position:absolute;bottom:0;width:16px;height:16px}
:host::before{left:-16px;background:radial-gradient(circle at 0 0,transparent 15.500px,#fff 16px)}
:host::after{right:-16px;background:radial-gradient(circle at 100% 0,transparent 15.500px,#fff 16px)}
.t{margin-left:18px;flex:1;padding-bottom:1px}
</style><svg width="28" height="28" viewBox="0 0 28 28"><circle cx="14" cy="14" r="14" fill="#505357"/><circle cx="14" cy="14" r="11.300" fill="#fff"/><path fill="#505357" d="M1.500 13.500H9.500C11.500 13.500 12 16 12.500 16.500L15.500 17C16.500 18.500 15 20.500 13 21 10.500 21.500 11.500 23 11 25.500L5 24 1.500 18ZM16.500 2 15.500 6.500C13.500 8 11 8 10.500 9.500 12 11 14.500 9.500 15.500 11 16 13.500 17.500 14.800 20 14.500L22 13H26V8L21 3Z"/></svg>
<div class="t"><slot></slot></div><svg width="18" height="18"><path d="M2 2l14 14M16 2L2 16" stroke="#3c4043" stroke-width="2.600" stroke-linecap="round"/></svg>`);

define('omni-box', `<style>
:host{display:flex;align-items:center;height:72px;box-sizing:border-box;padding-left:28px;padding-right:38px;flex:none;background:#fff;font-size:27.200px;color:#202124}
.nav{width:188px}
.box{display:flex;align-items:center;width:2656px;height:56px;border-radius:28px;background:#f1f3f4;box-sizing:border-box;padding:0 20px 0 22px}
.s{color:#5f6368;margin:0 0 0 15px;width:63px}.bar{width:2px;height:32px;background:#9aa0a6;margin-right:17px}.u{flex:1}
.av{width:44px;height:44px;border-radius:50%;background:#dfe1e6;margin-left:22px}
</style>
<svg class="nav" width="188" height="40" viewBox="28 176 188 40" fill="none" stroke="#5f6368" stroke-width="2.800"><path d="M56 196H33M44.500 184 32.500 196 44.500 208"/><path d="M96 196h23M108 184l12 12-12 12"/><path d="M183 201.500A12 12 0 1 1 181.500 187.500"/><path d="M186 183v12.500h-12.500z" fill="#5f6368" stroke="none"/></svg>
<div class="box"><svg width="30" height="30" fill="none" stroke="#5f6368" stroke-width="2.800"><circle cx="15" cy="15" r="12.300"/><path d="M15 13.300v8.200M15 8.200v3"/></svg>
<div class="s"><slot name="scheme"></slot></div><div class="bar"></div><div class="u"><slot></slot></div>
<svg width="32" height="32" viewBox="0 0 32 32"><path d="M16 4l3.400 8.300 9 .7-6.900 5.900 2.200 8.800-7.700-4.800-7.700 4.800 2.200-8.800L3.600 13l9-.7z" fill="none" stroke="#5f6368" stroke-width="2.600"/></svg></div>
<svg class="av" width="44" height="44"><circle cx="22" cy="16" r="6" fill="#566174"/><path d="M10 34v-3c0-5 5-7.500 12-7.500s12 2.500 12 7.500v3z" fill="#566174"/></svg>
<svg width="10" height="32" style="margin-left:37px"><g fill="#5f6368"><circle cx="5" cy="6" r="3"/><circle cx="5" cy="16" r="3"/><circle cx="5" cy="26" r="3"/></g></svg>`);

define('login-form', `<style>:host{display:flex;flex-direction:column;gap:100px;padding:132px 0 0 912px;color:#000}</style><slot></slot>`);
define('form-field', `<style>
:host{display:flex;height:42px;gap:8px;align-items:flex-start;font:32px/38px "Liberation Serif",serif}
.in{width:936px;height:42px;box-sizing:border-box;border:2px solid #767676;border-radius:5px;padding:0 7px;font:26.667px/38px "Liberation Sans",sans-serif;background:#fff}
</style><span data-label></span><div class="in"><slot></slot></div>`);
define('form-actions', `<style>:host{display:flex;gap:8px}</style><slot></slot>`);
define('form-button', `<style>:host{display:block;height:42px;box-sizing:border-box;border:2px solid var(--bd,#767676);border-radius:6px;background:var(--bg,#efefef);text-align:center;font:26.667px/38px "Liberation Sans",sans-serif}</style><slot></slot>`);

define('js-alert', `<style>
:host{display:flex;flex-direction:column;width:896px;height:260px;box-sizing:border-box;padding:32px 32px;background:#fff;border-radius:9px;box-shadow:0 0 0 1px rgba(0,0,0,.2),0 8px 44px rgba(0,0,0,.28);color:#202124}
.t{font-size:29.200px;line-height:44px}.m{font-size:25.300px;line-height:36px;margin-top:19px}
.ok{align-self:flex-end;margin-top:auto;width:128px;height:64px;border-radius:8px;background:#3871e0;color:#fff;font-weight:600;font-size:24.500px;display:flex;align-items:center;justify-content:center;padding-bottom:1px;box-sizing:border-box}
</style><div class="t"><slot name="title"></slot></div><div class="m"><slot></slot></div><div class="ok"><slot name="ok"></slot></div>`);

define('mac-dock', `<style>
:host{display:flex;position:relative;margin:8px 0 0 110px;width:2804px;height:150px;box-sizing:border-box;padding-left:6.300px;border-radius:42px;overflow:hidden;box-shadow:inset 0 0 0 2px rgba(255,255,255,.16);
background:linear-gradient(180deg,rgba(0,0,0,.035),rgba(255,255,255,.04)),linear-gradient(94deg,#d2d1d0 0,#d3d2d1 560px,#cfcaca 610px,#c9b9b8 680px,#a89292 770px,#7a6870 850px,#655a69 900px,#625a6c 1150px,#68586f 1380px,#70607a 1500px,#775f7a 1800px,#7a6680 1960px,#736a70 2040px,#70706e 2120px,#7e7f79 2260px,#878780 2430px,#74746f 2500px,#5c5a5a 2560px,#685a60 2620px,#9a5560 2690px,#d85c60 2760px,#e85c5e 2804px)}
</style><slot></slot>`);

define('dock-item', `<style>
:host{display:block;position:relative;flex:none;width:127.500px;height:150px}
::slotted(svg){width:100%;height:150px;display:block;filter:drop-shadow(0 1px 2px rgba(0,0,0,.3))}
.dot{display:none;position:absolute;left:calc(50% - 4px);top:138px;width:8px;height:8px;border-radius:50%;background:var(--dot,#050505)}
:host([running]) .dot{display:block}
</style><slot></slot><i class="dot"></i>`);
define('dock-divider', `<style>:host{display:flex;flex:none;justify-content:center;align-items:center;box-sizing:border-box;height:150px}i{width:2px;height:110px;background:var(--line)}</style><i></i>`);

document.querySelectorAll('dock-item > svg').forEach(s => s.setAttribute('preserveAspectRatio', 'none'));

/* One-line text whose tracking is adjusted so that it fills the width given in "w". */
customElements.define('fit-text', class extends HTMLElement {
  constructor() {
    super();
    this.attachShadow({ mode: 'open' }).innerHTML = '<style>:host{display:block;white-space:pre}span{display:inline-block}</style><span><slot></slot></span>';
  }
  connectedCallback() {
    const s = this.shadowRoot.querySelector('span'), w = +this.getAttribute('w');
    this.style.width = w + 'px';
    s.style.letterSpacing = (w - s.getBoundingClientRect().width) / this.textContent.length + 'px';
  }
});
</script>
</body>
</html>
